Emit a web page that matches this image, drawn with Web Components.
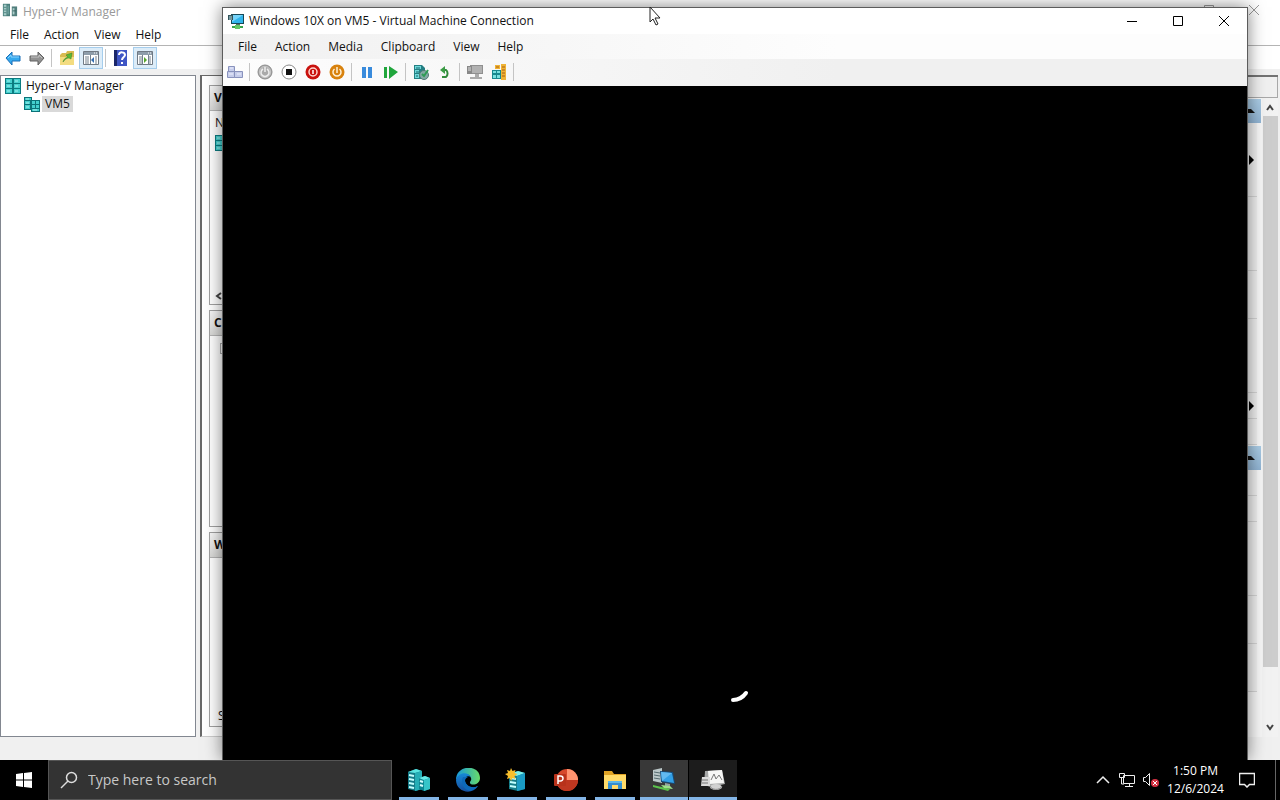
<!DOCTYPE html>
<html lang="en">
<head>
<meta charset="utf-8">
<meta name="viewport" content="width=device-width, initial-scale=1">
<title>Hyper-V Manager</title>
<style>
  html, body {
    height: 100%;
    margin: 0;
  }

  body {
    overflow: hidden;
    background: #000;
    font: 12px/16px "Open Sans", "Noto Sans", sans-serif;
    color: #111;
  }
</style>
</head>
<body>
<desktop-shell>
  <manager-window></manager-window>
  <vm-window slot="window"></vm-window>
  <task-bar slot="taskbar"></task-bar>
</desktop-shell>

<script>
const ICONS = {
  manager: ["0 0 18 16", `
    <path d="M1 1h8v14H1z" fill="#4b7f7d"/><path d="M2 2h3v12H2z" fill="#a5cbc7"/>
    <path d="M6 3h2v10H6z" fill="#6b9d99"/><path d="M2 5h3M2 8h3M2 11h3" stroke="#4b7f7d"/>
    <path d="M11 4h6v11h-6z" fill="#527f7d"/><path d="M12 6h2v7h-2z" fill="#b0d0cd"/>
    <path d="M12 9h4" stroke="#36605f"/>`],
  console: ["0 0 16 16", `
    <path d="M0 0h16v16H0z" fill="#0c7b80"/>
    <path d="M1 1h6v4H1zM9 1h6v4H9zM1 6h6v4H1zM9 6h6v4H9zM1 11h6v4H1zM9 11h6v4H9z" fill="#46d0cf"/>
    <path d="M2 3h3M10 3h3M2 8h3M10 8h3M2 13h3M10 13h3" stroke="#a9f2ef"/>`],
  host: ["0 0 16 16", `
    <path d="M0 1h8v3h8v12H7v-2H0z" fill="#0b7278"/>
    <path d="M1 2h6v2H1zM1 5h5v3H1zM1 9h5v4H1zM8 5h3v3H8zM12 5h3v3h-3zM8 9h3v3H8zM12 9h3v3h-3zM8 13h7v2H8z" fill="#43cfce"/>
    <path d="M2 3h3M2 7h3M2 11h3M9 14h4" stroke="#aef4f0"/>`],
  back: ["0 0 16 16", `<path d="M1 8l6-6v4h8v5H7v4z" fill="#35a9ee" stroke="#1a6fb8"/>
    <path d="M3 8l3-3v2h8" fill="none" stroke="#8bd5ff"/>`],
  forward: ["0 0 16 16", `<path d="M15 8L9 2v4H1v5h8v4z" fill="#929292" stroke="#606060"/>
    <path d="M2 7h8V5l3 3" fill="none" stroke="#c4c4c4"/>`],
  folder: ["0 0 16 16", `<path d="M1 5l2-2h4l1-2h7v14H1z" fill="#d9bb50"/>
    <path d="M1 7h14v8H1z" fill="#f3dc80"/><path d="M4 12c1-3 2-4 5-5L7 5l6-2-1 6-2-1c-2 0-4 1-6 4z" fill="#57b936" stroke="#388126" stroke-width=".5"/>`],
  paneLeft: ["0 0 16 16", `<path d="M.5 1.500h15v13H.5z" fill="#fff" stroke="#707983"/>
    <path d="M1 2h14v3H1z" fill="#8e9daa"/><path d="M2 7h4M2 9h4M2 11h4M2 13h4M12 7h2M12 9h2M12 11h2M12 13h2" stroke="#74818c"/>
    <path d="M7.500 5v10" stroke="#74818c"/><path d="M11 7v6L8 10z" fill="#356eb1"/><path d="M11 3h1M13 3h1" stroke="#fff"/>`],
  paneRight: ["0 0 16 16", `<path d="M.5 1.500h15v13H.5z" fill="#fff" stroke="#707983"/>
    <path d="M1 2h14v3H1z" fill="#8e9daa"/><path d="M2 7h3M2 9h3M2 11h3M2 13h3M12 7h2M12 9h2M12 11h2M12 13h2" stroke="#74818c"/>
    <path d="M5.500 5v10M11.500 5v10" stroke="#74818c"/><path d="M7 7v6l3-3z" fill="#56a62b"/><path d="M11 3h1M13 3h1" stroke="#fff"/>`],
  help: ["0 0 16 16", `<path d="M1 0h13v16H1z" fill="#3f56c4"/><path d="M1 0h3v16H1z" fill="#1b2769"/>
    <path d="M6 5c0-4 6-3 6 0 0 2-3 2-3 5" fill="none" stroke="#fff" stroke-width="2"/><path d="M8 12h2v2H8z" fill="#fff"/>`],
  monitor: ["0 0 16 16", `<path d="M3 1h13v10H3z" fill="#184957"/><path d="M4 2h11v8H4z" fill="#30b5ed"/>
    <path d="M4 2h11L4 9z" fill="#75d4fa"/><path d="M0 2h5v5H0z" fill="#33545c"/><path d="M1 4h3M1 6h3" stroke="#b8dce1"/>
    <path d="M8 11h4v2H8z" fill="#557066"/><path d="M4 13h11v2H4z" fill="#37a64a"/><path d="M7 12h5v4H7z" fill="#63c766"/>`],
  ctrlAltDel: ["0 0 16 16", `<g fill="#c6cdea" stroke="#8992bd"><path d="M1.500 2.500h6v5h-6zM.5 7.500h7v6h-7zM7.500 7.500h8v6h-8z"/></g>
    <path d="M3 4h3M2 10h4M10 10h4" stroke="#edf0ff"/>`],
  start: ["0 0 16 16", `<circle cx="8" cy="8" r="7" fill="#aaa" stroke="#8c8c8c"/><circle cx="8" cy="8" r="5.500" fill="none" stroke="#c8c8c8"/>
    <path d="M6 5a4 4 0 1 0 4 0M8 3v5" fill="none" stroke="#eee" stroke-width="1.500"/>`],
  turnOff: ["0 0 16 16", `<circle cx="8" cy="8" r="7" fill="#fff" stroke="#888"/><path d="M5 5h6v6H5z" fill="#111"/>`],
  shutDown: ["0 0 16 16", `<circle cx="8" cy="8" r="7.500" fill="#c9120e"/><circle cx="8" cy="8" r="4" fill="none" stroke="#ffd7d0" stroke-width="1.500"/>
    <path d="M8 6v4" stroke="#fff" stroke-width="1.500"/>`],
  save: ["0 0 16 16", `<circle cx="8" cy="8" r="7.500" fill="#d8820e"/><path d="M5.500 5a4 4 0 1 0 5 0M8 3v6" fill="none" stroke="#fff1d6" stroke-width="1.500"/>`],
  pause: ["0 0 16 16", `<path d="M3 3h4v11H3zM9 3h4v11H9z" fill="#398bdc"/>`],
  reset: ["0 0 16 16", `<path d="M1 3h3v11H1zM6 2l9 6-9 7z" fill="#20a63c"/>`],
  checkpoint: ["0 0 16 16", `<path d="M1 1h8l3 3v11H1z" fill="#247f83"/><path d="M2 2h6v3H2zM2 6h4v3H2zM2 10h4v4H2z" fill="#6fd8d9"/>
    <path d="M3 4h4M3 8h3M3 12h2" stroke="#16656e"/><circle cx="11" cy="11" r="4.500" fill="#83a9a4" stroke="#537b74"/>
    <path d="M9 10l2 2 4-6" fill="none" stroke="#2f9c55" stroke-width="2"/>`],
  revert: ["0 0 16 16", `<path d="M5 6h4a3 4 0 0 1 0 7H5" fill="none" stroke="#318b3b" stroke-width="2"/>
    <path d="M8 2v8L3 6z" fill="#3c9c46"/>`],
  enhanced: ["0 0 16 16", `<path d="M3 1h13v9H3z" fill="#8f8f8f"/><path d="M4 2h11v7H4z" fill="#b1b1b1"/>
    <path d="M0 2h5v8H0z" fill="#888"/><path d="M1 4h3M1 6h3" stroke="#ddd"/><path d="M8 10h4v3H8zM3 13h12v2H3z" fill="#aaa"/>`],
  share: ["0 0 16 16", `<path d="M4 1h5v4H4zM10 0h5v16h-5z" fill="#efb334"/><path d="M1 6h9v9H1z" fill="#16888e"/>
    <path d="M2 7h3v2H2zM6 7h3v2H6zM2 11h3v3H2zM6 11h3v3H6z" fill="#76e0df"/><path d="M11 3h3M11 6h3M11 9h3M11 12h3M5 3h3" stroke="#a75c17"/>`],
  minimize: ["0 0 16 16", `<path d="M3 8.500h10" stroke="currentColor"/>`],
  maximize: ["0 0 16 16", `<path d="M3.500 3.500h9v9h-9z" fill="none" stroke="currentColor"/>`],
  close: ["0 0 16 16", `<path d="M3 3l10 10M13 3L3 13" stroke="currentColor"/>`],
  up: ["0 0 16 16", `<path d="M5 10l3-4 3 4" fill="none" stroke="#444" stroke-width="2"/>`],
  down: ["0 0 16 16", `<path d="M5 6l3 4 3-4" fill="none" stroke="#444" stroke-width="2"/>`],
  left: ["0 0 16 16", `<path d="M6 5L2 8l4 3" fill="none" stroke="#444" stroke-width="2"/>`],
  collapse: ["0 0 16 16", `<path d="M0 10h12L8 6H5z" fill="#111"/>`],
  more: ["0 0 16 16", `<path d="M9 3v10l5-5z" fill="#000"/>`],
  windows: ["0 0 16 16", `<path d="M0 2l7-1v6.500H0zM8 1l8-1v7.500H8zM0 8.500h7V15l-7-1zM8 8.500h8V16l-8-1z" fill="#fff"/>`],
  search: ["0 0 18 18", `<circle cx="11.500" cy="6.500" r="5" fill="none" stroke="#ddd" stroke-width="1.500"/><path d="M8 10l-7 7" stroke="#ddd" stroke-width="1.500"/>`],
  servers: ["0 0 24 24", `<path d="M1 4l8-3 6 2v18l-6 2-8-2z" fill="#147b88"/><path d="M1 4l8-3 6 2-7 2z" fill="#5be5e1"/>
    <path d="M8 5l7-2v18l-7 2z" fill="#25aeb6"/><path d="M2 7l5 1M2 11l5 1M2 15l5 1M2 19l5 1" stroke="#c4ffff" stroke-width="2"/>
    <path d="M12 10l6-2 5 2v11l-6 2-5-2z" fill="#0d8793"/><path d="M12 10l6-2 5 2-6 2z" fill="#67eae8"/>
    <path d="M17 12l6-2v11l-6 2z" fill="#36c5c9"/><path d="M13 13l3 1M13 17l3 1" stroke="#d4ffff" stroke-width="2"/>`],
  edge: ["0 0 24 24", `<defs><linearGradient id="a" x1="0" x2="1"><stop stop-color="#1697dd"/><stop offset="1" stop-color="#69dc68"/></linearGradient>
    <linearGradient id="b" x2="0" y2="1"><stop stop-color="#1689d8"/><stop offset="1" stop-color="#164e9e"/></linearGradient></defs>
    <path d="M0 12C0-4 24-4 24 10c0 7-9 8-10 5-.5-2 2-2 1-5C13 4 4 5 0 12z" fill="url(#a)"/>
    <path d="M0 12c2-8 12-9 15-3-4-2-7 1-6 4 1 5 7 8 13 5-6 10-22 6-22-6z" fill="url(#b)"/>
    <path d="M7 9c-3 6 1 13 7 14 4-1 6-3 8-5-6 3-12 0-13-5 0-2 1-3 3-4z" fill="#0d69ba"/>`],
  serverManager: ["0 0 24 24", `<path d="M4 6l9-3 7 2v16l-7 2-9-2z" fill="#147c88"/><path d="M4 6l9-3 7 2-8 3z" fill="#7af0ed"/>
    <path d="M12 8l8-3v16l-8 2z" fill="#1a9bc4"/><path d="M5 10l6 1M5 14l6 1M5 18l6 1" stroke="#c1ffff" stroke-width="2"/>
    <path d="M6 0l1.500 3 3-1-1 3 3 1-3 2 1 3-3-1L6 13l-1-3-3 1 1-3-3-2 3-1-1-3 3 1z" fill="#f8bf2c"/>`],
  powerpoint: ["0 0 24 24", `<circle cx="13" cy="12" r="11" fill="#d6492c"/><path d="M13 1a11 11 0 0 1 11 11H13z" fill="#ff9470"/>
    <path d="M2 12h22a11 11 0 0 1-22 0z" fill="#bf3720"/><rect y="6" width="12" height="12" rx="1" fill="#b8321b"/>
    <path d="M4 16V8h2.500a2.500 2.500 0 0 1 0 5H4" fill="none" stroke="#fff" stroke-width="1.500"/>`],
  explorer: ["0 0 24 24", `<path d="M1 3h8l2 3h12v15H1z" fill="#dfa224"/><path d="M1 7h22v14H1z" fill="#ffda68"/>
    <path d="M5 13h14v8h-4v-4H9v4H5z" fill="#348dce"/><path d="M5 13h14v2H5z" fill="#5bb7e8"/>`],
  vmConnect: ["0 0 24 24", `<path d="M1 2l9-2v15l-9-2z" fill="#bbc7c8"/><path d="M2 4l6 1M2 7l6 1M2 10l6 1" stroke="#53696d"/>
    <path d="M8 3l13 1 2 12-14-2z" fill="#164b78"/><path d="M9 4l11 1 2 10-12-2z" fill="#329fe5"/><path d="M9 4l11 1-10 8z" fill="#62baf0"/>
    <path d="M13 15l5 1v3l-5-1z" fill="#94a2a2"/><path d="M1 17l17 4-2 2-15-4z" fill="#5bc34c"/><path d="M9 17l9 1 3 3-9-1z" fill="#9be088"/>`],
  viewer: ["0 0 24 24", `<path d="M4 3l17-1 3 14-14 3-7-2z" fill="#a7a8a8"/><path d="M7 3l14-1 2 13-15 1z" fill="#f6f6f5"/>
    <path d="M1 9h8v9H0z" fill="#dcdcdc"/><path d="M1 12h6M1 15h6" stroke="#777"/><path d="M10 12l3-6 2 5 3-4 3 5" fill="none" stroke="#777"/>
    <ellipse cx="15" cy="19" rx="6" ry="3" fill="#d1d1d1"/><path d="M9 18c1 4 10 5 12 0" fill="none" stroke="#888"/>`],
  chevron: ["0 0 16 16", `<path d="M2 11l6-6 6 6" fill="none" stroke="#eee" stroke-width="1.500"/>`],
  network: ["0 0 16 16", `<path d="M4.500 3.500h11v8h-11zM10.500 11v3M6 14.500h8M.5 1.500h5v4h-5zM2.500 6v6H5" fill="none" stroke="#eee"/>`],
  muted: ["0 0 16 16", `<path d="M.5 5.500h2l4-4v12l-4-4h-2z" fill="none" stroke="#eee"/><circle cx="12" cy="11" r="4" fill="#d43142"/>
    <path d="M10 9l4 4M14 9l-4 4" stroke="#fff"/>`],
  notifications: ["0 0 16 16", `<path d="M.5 1.500h15v11h-5L8 15l-2.500-2.500h-5z" fill="none" stroke="#eee" stroke-width="1.500"/>`]
};

class AppIcon extends HTMLElement {
  constructor() {
    super();
    this.attachShadow({ mode: "open" });
  }

  static get styles() {
    return /* css */`
      :host {
        display: block;
        flex: none;
        width: var(--icon-size, 16px);
        height: var(--icon-size, 16px);
      }

      svg {
        display: block;
        width: 100%;
        height: 100%;
      }
    `;
  }

  connectedCallback() {
    const [box, shapes] = ICONS[this.getAttribute("name")];
    this.shadowRoot.innerHTML = /* html */`
    <style>${AppIcon.styles}</style>
    <svg viewBox="${box}" aria-hidden="true">${shapes}</svg>`;
  }
}

customElements.define("app-icon", AppIcon);

class MenuBar extends HTMLElement {
  constructor() {
    super();
    this.attachShadow({ mode: "open" });
  }

  static get styles() {
    return /* css */`
      :host {
        display: block;
      }

      nav {
        display: flex;
        align-items: center;
        height: 100%;
        gap: var(--menu-gap, 15px);
      }

      button {
        border: 0;
        padding: 0;
        background: none;
        font: inherit;
        color: inherit;
      }
    `;
  }

  connectedCallback() {
    const items = this.getAttribute("items").split(",");
    this.shadowRoot.innerHTML = /* html */`
    <style>${MenuBar.styles}</style>
    <nav>${items.map((item) => `<button type="button">${item}</button>`).join("")}</nav>`;
  }
}

customElements.define("menu-bar", MenuBar);

/* A row of icon buttons. "|" in the items list is a separator, "*" marks a pressed button. */
class ToolBar extends HTMLElement {
  constructor() {
    super();
    this.attachShadow({ mode: "open" });
  }

  static get styles() {
    return /* css */`
      :host {
        display: flex;
        align-items: center;
      }

      button {
        display: grid;
        place-items: center;
        box-sizing: border-box;
        flex: none;
        width: 24px;
        height: 22px;
        border: 0;
        padding: 0;
        background: none;
      }

      .pressed {
        border: 1px solid #a5cdec;
        background: #dcecf8;
      }

      i {
        width: 1px;
        height: 18px;
        margin: 0 3px 0 2px;
        background: var(--separator, #c4c4c4);
      }
    `;
  }

  connectedCallback() {
    const items = this.getAttribute("items").split(" ").map((item) => {
      if (item === "|") return "<i></i>";
      const name = item.replace("*", "");
      const pressed = item.endsWith("*");
      return `<button type="button" aria-label="${name}" class="${pressed ? "pressed" : ""}"><app-icon name="${name}"></app-icon></button>`;
    });
    this.shadowRoot.innerHTML = /* html */`
    <style>${ToolBar.styles}</style>${items.join("")}`;
  }
}

customElements.define("tool-bar", ToolBar);

class GroupPanel extends HTMLElement {
  constructor() {
    super();
    this.attachShadow({ mode: "open" });
  }

  static get styles() {
    return /* css */`
      :host {
        display: flex;
        flex-direction: column;
        box-sizing: border-box;
        overflow: hidden;
        border: 1px solid #a0a0a0;
        background: #fff;
      }

      h2 {
        flex: none;
        margin: 0;
        padding: 4px;
        border-bottom: 1px solid #b4b4b4;
        background: linear-gradient(#f8f8f8, #d9d9d7);
        font-size: 12px;
        line-height: 16px;
      }

      div {
        display: flex;
        flex: 1;
        flex-direction: column;
        align-items: flex-start;
        padding: 4px 5px 0;
        gap: 4px;
      }
    `;
  }

  connectedCallback() {
    this.shadowRoot.innerHTML = /* html */`
    <style>${GroupPanel.styles}</style>
    <h2>${this.getAttribute("heading")}</h2>
    <div><slot></slot></div>`;
  }
}

customElements.define("group-panel", GroupPanel);

class ActionsPane extends HTMLElement {
  constructor() {
    super();
    this.attachShadow({ mode: "open" });
  }

  static get styles() {
    return /* css */`
      :host {
        display: grid;
        grid-template: 21px minmax(0, 1fr) / minmax(0, 1fr) 16px;
        box-sizing: border-box;
        border-top: 2px solid #737373;
        background: #f0f0f0;
      }

      header {
        grid-column: 1 / 3;
        border: 1px solid #a8a8a8;
        border-width: 0 1px 1px 0;
      }

      .list {
        overflow: hidden;
        background: #f7f7f7;
      }

      .group, .row {
        display: flex;
        align-items: center;
        justify-content: flex-end;
        box-sizing: border-box;
      }

      .group {
        height: 24px;
        margin: 1px 1px 0 0;
        padding-right: 2px;
        background: linear-gradient(#abcde6, #91b4d3);
      }

      .row {
        margin-right: 5px;
        padding-right: 1px;
        border-bottom: 1px solid #d5d5d5;
        background: #f0f0f0;
      }

      .small { height: 26px; }
      .medium { height: 48px; }
      .large { height: 74px; }

      .scroll {
        display: flex;
        flex-direction: column;
        align-items: center;
        padding: 2px 0;
        background: #f2f2f2;
      }

      .thumb {
        width: 15px;
        flex: 1;
        margin-bottom: 52px;
        background: #cdcdcd;
      }
    `;
  }

  connectedCallback() {
    this.shadowRoot.innerHTML = /* html */`
    <style>${ActionsPane.styles}</style>
    <header></header>
    <div class="list">
      <div class="group"><app-icon name="collapse"></app-icon></div>
      <div class="row large"><app-icon name="more"></app-icon></div>
      <div class="row large"></div>
      <div class="row medium"></div>
      <div class="row large"></div>
      <div class="row small"><app-icon name="more"></app-icon></div>
      <div class="row small"></div>
      <div class="group"><app-icon name="collapse"></app-icon></div>
      <div class="row small"></div>
      <div class="row small"></div>
      <div class="row large"></div>
      <div class="row medium"></div>
      <div class="row medium"></div>
    </div>
    <div class="scroll">
      <app-icon name="up"></app-icon>
      <div class="thumb"></div>
      <app-icon name="down"></app-icon>
    </div>`;
  }
}

customElements.define("actions-pane", ActionsPane);

class ManagerWindow extends HTMLElement {
  constructor() {
    super();
    this.attachShadow({ mode: "open" });
  }

  static get styles() {
    return /* css */`
      :host {
        display: grid;
        grid-template-rows: 24px 22px 23px minmax(0, 1fr) 23px;
        height: 100%;
        background: #f0f0f0;
      }

      .title, menu-bar, tool-bar {
        background: #fff;
      }

      .title {
        display: flex;
        align-items: center;
        padding: 0 18px 4px 2px;
        gap: 5px;
        color: #999;
      }

      h1 {
        flex: 1;
        margin: 4px 0 0;
        font-size: 12px;
        line-height: 16px;
        font-weight: 400;
      }

      .title button {
        border: 0;
        padding: 0;
        background: none;
        color: inherit;
      }

      .title button + button {
        margin-left: 24px;
      }

      menu-bar {
        padding-left: 10px;
        border-bottom: 1px solid #b4b4b4;
      }

      tool-bar {
        padding-left: 1px;
      }

      main {
        display: grid;
        grid-template-columns: 196px minmax(0, 1fr) 220px;
        gap: 4px;
        padding: 6px 2px 0 0;
      }

      .tree {
        box-sizing: border-box;
        margin: 0;
        padding: 1px 4px;
        border: 1px solid #828790;
        background: #fff;
        list-style: none;
      }

      .tree li {
        display: flex;
        align-items: center;
        gap: 5px;
        height: 18px;
      }

      .tree .child {
        padding-left: 19px;
        gap: 2px;
      }

      .child span {
        padding: 0 3px;
        background: #d9d9d9;
      }

      .center {
        display: grid;
        grid-template-rows: 220fr 217fr 195fr;
        box-sizing: border-box;
        padding: 9px 8px 9px 7px;
        gap: 5px;
        border: solid #696969;
        border-width: 1px 0 0 2px;
        border-bottom: 1px solid #ccc;
        background: #fff;
      }

      .end {
        margin-top: auto;
      }

      .status {
        padding: 0 3px 2px;
      }

      .inset {
        width: 9px;
        height: 9px;
        margin: 3px 5px;
        border: 1px solid #aaa;
      }
    `;
  }

  connectedCallback() {
    this.render();
  }

  render() {
    this.shadowRoot.innerHTML = /* html */`
    <style>${ManagerWindow.styles}</style>
    <div class="title">
      <app-icon name="manager"></app-icon>
      <h1>Hyper-V Manager</h1>
      <button type="button" aria-label="Maximize"><app-icon name="maximize"></app-icon></button>
      <button type="button" aria-label="Close"><app-icon name="close"></app-icon></button>
    </div>
    <menu-bar items="File,Action,View,Help"></menu-bar>
    <tool-bar items="back forward | folder paneLeft* | help paneRight*"></tool-bar>
    <main>
      <ul class="tree">
        <li><app-icon name="console"></app-icon>Hyper-V Manager</li>
        <li class="child"><app-icon name="host"></app-icon><span>VM5</span></li>
      </ul>
      <div class="center">
        <group-panel heading="V">
          <span>N</span>
          <app-icon name="console"></app-icon>
          <app-icon class="end" name="left"></app-icon>
        </group-panel>
        <group-panel heading="C"><span class="inset"></span></group-panel>
        <group-panel heading="W"><span class="end status">S</span></group-panel>
      </div>
      <actions-pane></actions-pane>
    </main>`;
  }
}

customElements.define("manager-window", ManagerWindow);

class VmWindow extends HTMLElement {
  constructor() {
    super();
    this.attachShadow({ mode: "open" });
  }

  static get styles() {
    return /* css */`
      :host {
        display: grid;
        grid-template-rows: 26px 25px 27px minmax(0, 1fr);
        box-sizing: border-box;
        border: 1px solid #5c5c5c;
        border-bottom: 0;
        background: #fff;
        box-shadow: 0 0 16px rgba(0, 0, 0, .5);
      }

      .title {
        display: flex;
        align-items: center;
        padding-left: 5px;
      }

      h1 {
        flex: 1;
        margin: 0 5px;
        font-size: 12px;
        line-height: 16px;
        font-weight: 400;
      }

      .title button {
        display: grid;
        place-items: center;
        width: 46px;
        height: 26px;
        border: 0;
        padding: 0;
        background: none;
        color: #000;
      }

      menu-bar {
        --menu-gap: 18px;
        padding-left: 15px;
        background: linear-gradient(90deg, #f0f0f0, #fdfdfd 60%);
      }

      tool-bar {
        padding-bottom: 2px;
        background: linear-gradient(90deg, #fdfdfd, #f0f0f0 60%);
      }

      .screen {
        display: flex;
        align-items: flex-end;
        justify-content: center;
        padding-bottom: 56px;
        background: #000;
      }
    `;
  }

  connectedCallback() {
    this.render();
  }

  render() {
    this.shadowRoot.innerHTML = /* html */`
    <style>${VmWindow.styles}</style>
    <div class="title">
      <app-icon name="monitor"></app-icon>
      <h1>Windows 10X on VM5 - Virtual Machine Connection</h1>
      <button type="button" aria-label="Minimize"><app-icon name="minimize"></app-icon></button>
      <button type="button" aria-label="Maximize"><app-icon name="maximize"></app-icon></button>
      <button type="button" aria-label="Close"><app-icon name="close"></app-icon></button>
    </div>
    <menu-bar items="File,Action,Media,Clipboard,View,Help"></menu-bar>
    <tool-bar items="ctrlAltDel | start turnOff shutDown save | pause reset | checkpoint revert | enhanced share |"></tool-bar>
    <div class="screen">
      <svg width="44" height="44" viewBox="0 0 44 44" aria-hidden="true">
        <path d="M20 40Q28 40 33 33" fill="none" stroke="#fff" stroke-width="4" stroke-linecap="round"/>
      </svg>
    </div>`;
  }
}

customElements.define("vm-window", VmWindow);

class TaskBar extends HTMLElement {
  constructor() {
    super();
    this.attachShadow({ mode: "open" });
  }

  static get styles() {
    return /* css */`
      :host {
        display: flex;
        height: 40px;
        background: #000;
        color: #fff;
      }

      button {
        display: grid;
        place-items: center;
        border: 0;
        padding: 0;
        background: none;
        font: inherit;
        color: inherit;
      }

      .start {
        width: 48px;
      }

      .search {
        display: flex;
        align-items: center;
        box-sizing: border-box;
        width: 344px;
        padding-left: 11px;
        gap: 10px;
        border: 1px solid #555;
        background: #333;
        --icon-size: 18px;
      }

      input {
        flex: 1;
        min-width: 0;
        border: 0;
        padding: 0;
        outline: 0;
        background: none;
        font: 14px/20px "Open Sans", "Noto Sans", sans-serif;
        color: #fff;
      }

      input::placeholder {
        color: #c8c8c8;
        opacity: 1;
      }

      .apps {
        display: flex;
        flex: 1;
        margin-left: 3px;
        gap: 1px;
        --icon-size: 24px;
      }

      .apps button {
        width: 48px;
        background: linear-gradient(#83b5e6, #83b5e6) center bottom / 40px 3px no-repeat;
      }

      .apps .open {
        background: linear-gradient(#83b5e6, #83b5e6) center bottom / 100% 3px no-repeat #1c1c1c;
      }

      .apps .active {
        background-color: #383838;
      }

      .tray {
        display: flex;
        align-items: center;
      }

      .tray button {
        width: 24px;
        height: 40px;
      }

      .tray .clock {
        width: 65px;
        line-height: 18px;
      }

      .tray .notes {
        width: 37px;
        margin-right: 10px;
      }

      .peek {
        width: 4px;
        border-left: 1px solid #666;
      }
    `;
  }

  connectedCallback() {
    this.render();
  }

  render() {
    this.shadowRoot.innerHTML = /* html */`
    <style>${TaskBar.styles}</style>
    <button type="button" class="start" aria-label="Start"><app-icon name="windows"></app-icon></button>
    <label class="search">
      <app-icon name="search"></app-icon>
      <input type="text" aria-label="Search" placeholder="Type here to search">
    </label>
    <div class="apps">
      <button type="button" aria-label="Servers"><app-icon name="servers"></app-icon></button>
      <button type="button" aria-label="Edge"><app-icon name="edge"></app-icon></button>
      <button type="button" aria-label="Server Manager"><app-icon name="serverManager"></app-icon></button>
      <button type="button" aria-label="PowerPoint"><app-icon name="powerpoint"></app-icon></button>
      <button type="button" aria-label="File Explorer"><app-icon name="explorer"></app-icon></button>
      <button type="button" class="open active" aria-label="Virtual machine"><app-icon name="vmConnect"></app-icon></button>
      <button type="button" class="open" aria-label="Viewer"><app-icon name="viewer"></app-icon></button>
    </div>
    <div class="tray">
      <button type="button" aria-label="Hidden icons"><app-icon name="chevron"></app-icon></button>
      <button type="button" aria-label="Network"><app-icon name="network"></app-icon></button>
      <button type="button" aria-label="Volume"><app-icon name="muted"></app-icon></button>
      <button type="button" class="clock"><span>1:50 PM<br>12/6/2024</span></button>
      <button type="button" class="notes" aria-label="Notifications"><app-icon name="notifications"></app-icon></button>
    </div>
    <span class="peek"></span>`;
  }
}

customElements.define("task-bar", TaskBar);

class DesktopShell extends HTMLElement {
  constructor() {
    super();
    this.attachShadow({ mode: "open" });
  }

  static get styles() {
    return /* css */`
      :host {
        display: grid;
        grid-template-rows: minmax(0, 1fr) auto;
        height: 100vh;
      }

      .area {
        position: relative;
        overflow: hidden;
      }

      /* The connection window floats over the manager. */
      ::slotted([slot="window"]) {
        position: absolute;
        inset: 7px 32px 0 222px;
      }

      .pointer {
        position: absolute;
        top: 6px;
        left: 649px;
      }
    `;
  }

  connectedCallback() {
    this.shadowRoot.innerHTML = /* html */`
    <style>${DesktopShell.styles}</style>
    <div class="area">
      <slot></slot>
      <slot name="window"></slot>
      <svg class="pointer" width="13" height="20" viewBox="0 0 13 20" aria-hidden="true">
        <path d="M1 1v15l3-3 3 6 2-1-3-6h5z" fill="#fff" stroke="#222"/>
      </svg>
    </div>
    <slot name="taskbar"></slot>`;
  }
}

customElements.define("desktop-shell", DesktopShell);
</script>
</body>
</html>
